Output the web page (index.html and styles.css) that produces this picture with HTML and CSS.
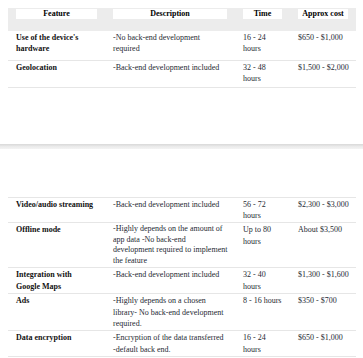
FILE: index.html
```html
<!DOCTYPE html>
<html lang="en">
<head>
<meta charset="utf-8">
<title>Feature cost table</title>
<link rel="stylesheet" href="styles.css">
</head>
<body>
<div class="page">
  <table class="features">
    <colgroup>
      <col class="c-feat"><col class="c-desc"><col class="c-time"><col class="c-cost">
    </colgroup>
    <thead>
      <tr>
        <th><span class="th-label">Feature</span></th>
        <th><span class="th-label">Description</span></th>
        <th><span class="th-label">Time</span></th>
        <th><span class="th-label">Approx cost</span></th>
      </tr>
    </thead>
    <tbody>
      <tr class="first">
        <td class="feat">Use of the device's hardware</td>
        <td>-No back-end development required</td>
        <td>16 - 24 hours</td>
        <td>$650 - $1,000</td>
      </tr>
      <tr class="second">
        <td class="feat">Geolocation</td>
        <td>-Back-end development included</td>
        <td>32 - 48 hours</td>
        <td>$1,500 - $2,000</td>
      </tr>
    </tbody>
  </table>

  <div class="ad-gap"><div class="ad-rule"></div></div>

  <table class="features cont">
    <colgroup>
      <col class="c-feat"><col class="c-desc"><col class="c-time"><col class="c-cost">
    </colgroup>
    <tbody>
      <tr>
        <td class="feat">Video/audio streaming</td>
        <td>-Back-end development included</td>
        <td>56 - 72 hours</td>
        <td>$2,300 - $3,000</td>
      </tr>
      <tr>
        <td class="feat">Offline mode</td>
        <td class="dense">-Highly depends on the amount of app data -No back-end development required to implement the feature</td>
        <td>Up to 80 hours</td>
        <td>About $3,500</td>
      </tr>
      <tr>
        <td class="feat">Integration with Google Maps</td>
        <td>-Back-end development included</td>
        <td>32 - 40 hours</td>
        <td>$1,300 - $1,600</td>
      </tr>
      <tr>
        <td class="feat">Ads</td>
        <td>-Highly depends on a chosen library- No back-end development required.</td>
        <td>8 - 16 hours</td>
        <td>$350 - $700</td>
      </tr>
      <tr>
        <td class="feat">Data encryption</td>
        <td>-Encryption of the data transferred -default back end.</td>
        <td>16 - 24 hours</td>
        <td>$650 - $1,000</td>
      </tr>
    </tbody>
  </table>
</div>
</body>
</html>
```

FILE: styles.css
```css
html, body {
  margin: 0;
  padding: 0;
  background: #ffffff;
}

body {
  font-family: "Liberation Serif", "Times New Roman", serif;
  font-size: 8px;
  color: #262a33;
}

.page {
  padding: 8px 7px 0 8px;
}

.features {
  border-collapse: collapse;
  table-layout: fixed;
  width: 348px;
}

.c-feat { width: 97px; }
.c-desc { width: 130px; }
.c-time { width: 55px; }
.c-cost { width: 66px; }

.features th {
  background: #ececec;
  padding: 1px 8px 12px 8px;
  font-weight: bold;
  vertical-align: top;
}

.th-label {
  display: block;
  background: #ffffff;
  line-height: 10px;
  text-align: center;
  color: #000000;
}

.features td {
  padding: 1px 7px 1px 8px;
  vertical-align: top;
  line-height: 11.4px;
  border-bottom: 1px solid #e6e6e6;
  color: #262a33;
}

.features td:nth-child(1) { padding-right: 10px; }

.features td.dense {
  line-height: 10.5px;
}

.features tr.first td {
  padding-top: 1px;
  padding-bottom: 5px;
}

.features tr.second td {
  padding-bottom: 2px;
}

.features td.feat {
  font-weight: bold;
  color: #111111;
}

.features.cont {
  border-top: 1px solid #e6e6e6;
}

.ad-gap {
  margin: 0 -7px 0 -8px;
  padding: 56px 0 48px;
}

.ad-rule {
  height: 5px;
  background: linear-gradient(#dcdcdc 0, #dcdcdc 1px, #e9e9e9 2px, #f3f3f3 5px);
}
```
